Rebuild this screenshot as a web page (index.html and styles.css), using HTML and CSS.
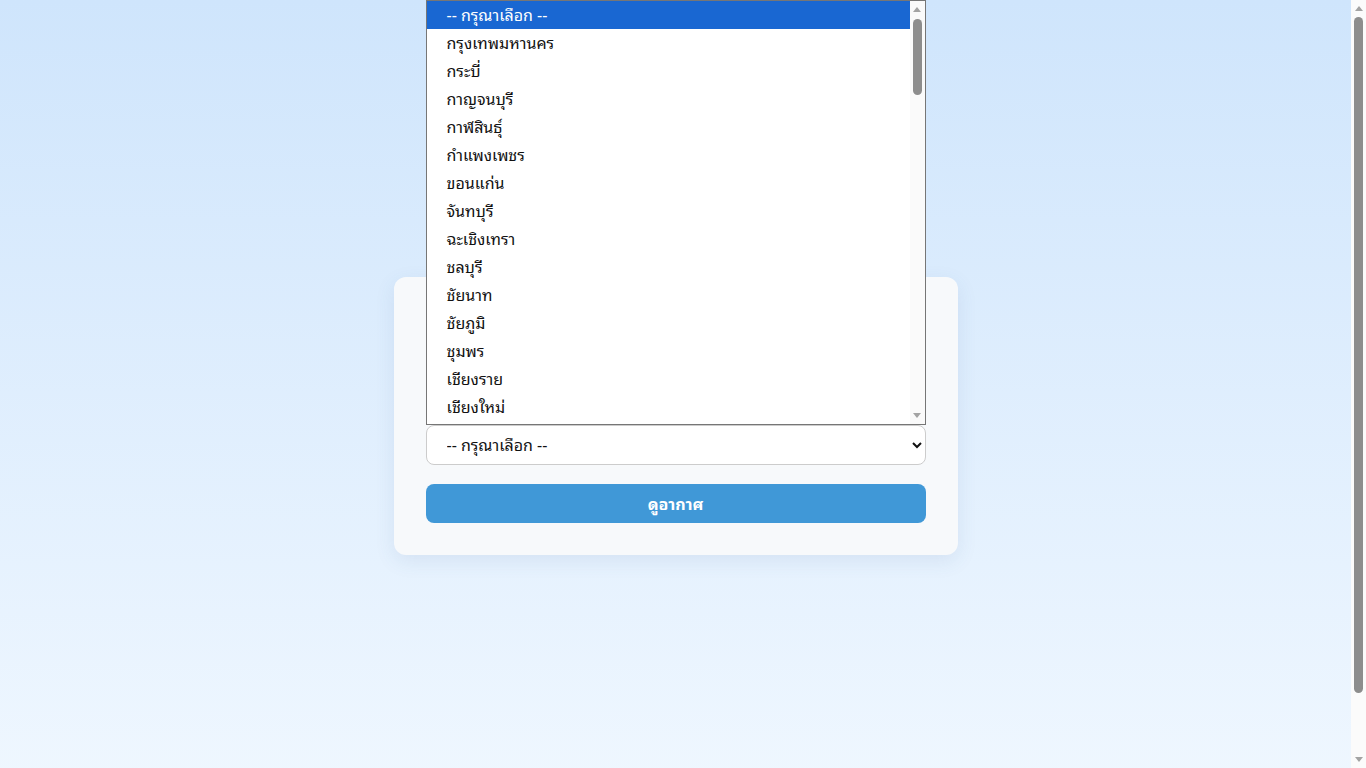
FILE: index.html
```html
<!DOCTYPE html>
<html lang="th">
<head>
<meta charset="utf-8">
<title>ดูอากาศ</title>
<link rel="stylesheet" href="styles.css">
</head>
<body>
<main class="card">
  <div class="field">
    <div class="popup">
      <div class="list">
        <div class="opt opt-active">-- กรุณาเลือก --</div>
        <div class="opt">กรุงเทพมหานคร</div>
        <div class="opt">กระบี่</div>
        <div class="opt">กาญจนบุรี</div>
        <div class="opt">กาฬสินธุ์</div>
        <div class="opt">กำแพงเพชร</div>
        <div class="opt">ขอนแก่น</div>
        <div class="opt">จันทบุรี</div>
        <div class="opt">ฉะเชิงเทรา</div>
        <div class="opt">ชลบุรี</div>
        <div class="opt">ชัยนาท</div>
        <div class="opt">ชัยภูมิ</div>
        <div class="opt">ชุมพร</div>
        <div class="opt">เชียงราย</div>
        <div class="opt">เชียงใหม่</div>
      </div>
      <div class="sbar">
        <span class="arrow arrow-up"></span>
        <span class="thumb thumb-popup"></span>
        <span class="sbar-fill"></span>
        <span class="arrow arrow-down"></span>
      </div>
    </div>
    <select class="select" id="province" aria-label="จังหวัด">
      <option>-- กรุณาเลือก --</option>
    </select>
  </div>
  <button class="btn" type="button">ดูอากาศ</button>
</main>
<div class="sbar sbar-page">
  <span class="arrow arrow-up"></span>
  <span class="thumb thumb-page"></span>
  <span class="sbar-fill"></span>
  <span class="arrow arrow-down"></span>
</div>
</body>
</html>
```

FILE: styles.css
```css
html, body {
  margin: 0;
}
body {
  min-height: 100vh;
  padding: 32px 15px 32px 0;
  display: flex;
  align-items: center;
  justify-content: center;
  background: linear-gradient(to bottom, #cfe5fc 0%, #f1f8ff 100%);
  font-family: "Noto Sans Thai Looped", "Loma", "Garuda", "Tahoma", "Noto Sans Thai", "Noto Sans", "DejaVu Sans", sans-serif;
  color: #111;
}
.card {
  width: 500px;
  padding: 32px;
  background: #f7f9fb;
  border-radius: 12px;
  box-shadow: 0 6px 20px rgba(60, 100, 150, 0.10);
}
.field {
  position: relative;
  margin-top: 116px;
}
.select {
  display: block;
  width: 100%;
  height: 40px;
  box-sizing: border-box;
  padding: 0 16px 2px;
  border: 1px solid #cccccc;
  border-radius: 8px;
  background: #ffffff;
  font-family: inherit;
  font-size: 16px;
  color: #111;
}
.popup {
  position: absolute;
  left: 0;
  right: 0;
  bottom: 100%;
  height: 425px;
  box-sizing: border-box;
  border: 1px solid #767676;
  background: #ffffff;
  display: flex;
  z-index: 5;
}
.list {
  flex: 1;
  overflow: hidden;
}
.opt {
  height: 28px;
  box-sizing: border-box;
  line-height: 26px;
  padding: 0 0 2px 20px;
  font-size: 16px;
  color: #111;
  white-space: nowrap;
}
.opt-active {
  background: #1967d2;
  color: #ffffff;
}
.sbar {
  width: 15px;
  flex: none;
  display: flex;
  flex-direction: column;
  align-items: center;
  background: #fafafa;
}
.sbar-page {
  position: fixed;
  top: 0;
  right: 0;
  height: 100vh;
  background: #fbfbfb;
}
.arrow {
  flex: none;
  width: 15px;
  height: 17px;
  display: flex;
  align-items: center;
  justify-content: center;
}
.arrow::before {
  content: "";
  width: 0;
  height: 0;
  border-left: 4px solid transparent;
  border-right: 4px solid transparent;
}
.arrow-up::before {
  border-bottom: 5px solid #a3a3a3;
}
.arrow-down::before {
  border-top: 5px solid #a3a3a3;
}
.thumb {
  flex: none;
  width: 9px;
  border-radius: 5px;
  background: #8d8d8d;
}
.thumb-popup {
  height: 76px;
  margin-top: 1px;
}
.thumb-page {
  height: 676px;
}
.sbar-fill {
  flex: 1;
}
.btn {
  display: block;
  width: 100%;
  height: 39px;
  margin-top: 19px;
  padding: 0 0 2px;
  border: 0;
  border-radius: 8px;
  background: #4098d7;
  color: #ffffff;
  font-family: inherit;
  font-size: 16px;
  font-weight: bold;
}
```
